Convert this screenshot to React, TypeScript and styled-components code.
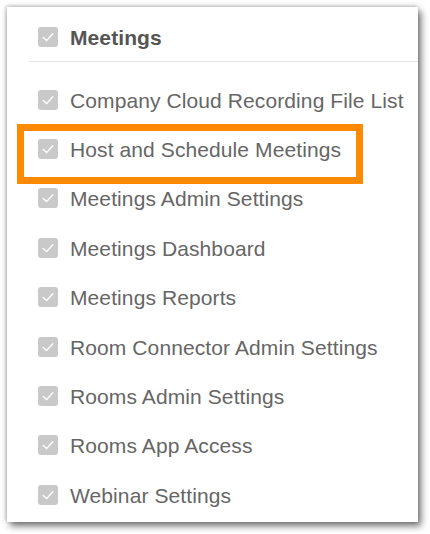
import { FC } from "react";
import styled, { createGlobalStyle } from "styled-components";

const GlobalStyle = createGlobalStyle`
  html, body {
    margin: 0;
    padding: 0;
    background: #fff;
  }
  body {
    font-family: 'Liberation Sans', Arial, Helvetica, sans-serif;
  }
`;

const Page = styled.div`
  width: 430px;
  height: 534px;
  padding: 7px;
  box-sizing: border-box;
`;

const Panel = styled.section`
  width: 411px;
  height: 515px;
  background: #fff;
  box-shadow: -1px -1px 4px rgba(0, 0, 0, 0.25), 3px 4px 7px rgba(0, 0, 0, 0.55);
  display: flex;
  flex-direction: column;
`;

const Header = styled.div`
  height: 54px;
  padding: 5px 0 0 31px;
  box-sizing: border-box;
  display: flex;
  align-items: center;
  gap: 12px;
`;

const Divider = styled.div`
  height: 1px;
  margin-left: 22px;
  background: #e4e4e4;
`;

const List = styled.ul`
  list-style: none;
  margin: 0;
  padding: 13px 0 0 0;
`;

const Row = styled.li<{ $highlighted?: boolean }>`
  position: relative;
  height: 49.4px;
  padding-left: 31px;
  display: flex;
  align-items: center;
  gap: 12px;

  ${({ $highlighted }) =>
    $highlighted &&
    `
    &::after {
      content: '';
      position: absolute;
      top: 0;
      left: 10px;
      width: 346px;
      height: 60px;
      box-sizing: border-box;
      border: 7px solid #ff8a00;
      pointer-events: none;
    }
  `}
`;

const Label = styled.span<{ $bold?: boolean }>`
  font-size: 21px;
  line-height: 1;
  letter-spacing: 0.1px;
  padding-top: 1px;
  color: ${({ $bold }) => ($bold ? "#555" : "#666")};
  font-weight: ${({ $bold }) => ($bold ? 700 : 400)};
  white-space: nowrap;
`;

const Box = styled.span`
  width: 20px;
  height: 20px;
  flex: none;
  border-radius: 3px;
  background: #c9c9c9;
  display: flex;
  align-items: center;
  justify-content: center;
`;

const Check: FC = () => (
  <Box>
    <svg width="20" height="20" viewBox="0 0 20 20">
      <path
        d="M5.2 10.4 L8.6 13.6 L14.8 6.8"
        fill="none"
        stroke="#fff"
        strokeWidth="1.4"
        strokeLinecap="round"
        strokeLinejoin="round"
      />
    </svg>
  </Box>
);

const items = [
  "Company Cloud Recording File List",
  "Host and Schedule Meetings",
  "Meetings Admin Settings",
  "Meetings Dashboard",
  "Meetings Reports",
  "Room Connector Admin Settings",
  "Rooms Admin Settings",
  "Rooms App Access",
  "Webinar Settings",
];

const App: FC = () => {
  return (
    <Page>
      <GlobalStyle />
      <Panel>
        <Header>
          <Check />
          <Label $bold>Meetings</Label>
        </Header>
        <Divider />
        <List>
          {items.map((item) => (
            <Row key={item} $highlighted={item === "Host and Schedule Meetings"}>
              <Check />
              <Label>{item}</Label>
            </Row>
          ))}
        </List>
      </Panel>
    </Page>
  );
};

export default App;
